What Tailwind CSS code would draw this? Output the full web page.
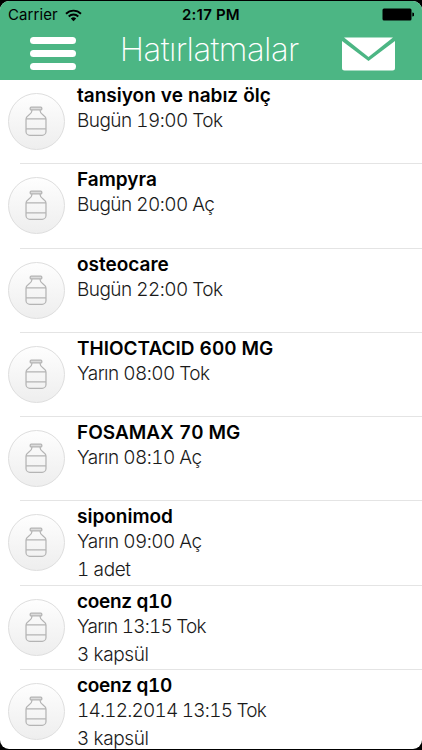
<!DOCTYPE html>
<html lang="tr">
<head>
  <meta charset="utf-8"/>
  <meta content="width=device-width, initial-scale=1.0" name="viewport"/>
  <title>Hatırlatmalar</title>
  <script src="https://cdn.jsdelivr.net/npm/@tailwindcss/browser@4"></script>
</head>
<body class="bg-black font-['Inter','Liberation_Sans',sans-serif] text-black">
  <svg class="hidden">
    <symbol id="bottle" viewBox="0 0 24 32">
      <g fill="none" stroke="#b4b4b4" stroke-width="1.3" stroke-linejoin="round">
        <rect x="6" y="1.2" width="12" height="2.8" rx="1" fill="#dcdcdc"/>
        <path d="M7.7 4v1.2c0 3.8-6 4.6-6 8.300v12.700a4 4 0 0 0 4 4h12.600a4 4 0 0 0 4-4V13.500c0-3.700-6-4.500-6-8.300V4"/>
        <path d="M1.700 13.300h20.600M1.700 23.700h20.600"/>
      </g>
    </symbol>
  </svg>

  <div class="mt-px flex h-[748px] w-[422px] flex-col overflow-hidden rounded-[9px] bg-white">
    <header class="h-[79px] shrink-0 bg-[#4cb684]">
      <div class="grid h-7 grid-cols-3 items-center pr-2 pl-2 text-[15px]">
        <div class="flex items-center gap-[7px]">
          <span class="tracking-[0.1px]">Carrier</span>
          <svg class="h-[13px] w-[17px]" viewBox="0 0 17 13" fill="none" stroke="#000" stroke-width="1.9">
            <path d="M1 4.700a10.700 10.700 0 0 1 15 0M3.700 7.500a6.900 6.900 0 0 1 9.600 0"/>
            <path d="M8.500 12.300l-2.700-2.800a3.900 3.900 0 0 1 5.400 0z" fill="#000" stroke="none"/>
          </svg>
        </div>
        <span class="text-center font-semibold tracking-[0.2px]">2:17 PM</span>
        <svg class="-mt-px h-[13px] w-8 justify-self-end" viewBox="0 0 32 13">
          <rect x=".5" y=".5" width="29" height="12" rx="1.500"/>
          <path d="M30.300 4.500a2 2 0 0 1 0 4z"/>
        </svg>
      </div>
      <div class="flex h-[51px] items-start justify-between pr-[26.500px] pl-[30px]">
        <button class="mt-2 flex w-[46px] flex-col gap-[6px]" aria-label="Menü">
          <span class="h-[7px] w-full rounded-full bg-white"></span>
          <span class="h-[7px] w-full rounded-full bg-white"></span>
          <span class="h-[7px] w-full rounded-full bg-white"></span>
        </button>
        <h1 class="text-[33px] leading-[41px] font-extralight tracking-[-0.6px] text-white">Hatırlatmalar</h1>
        <svg class="mt-2 h-[34px] w-[53px]" viewBox="0 0 53 34" aria-label="Mesajlar">
          <path d="M2 .5h49L26.500 20z" fill="#fff"/>
          <path d="M0 4l26.500 20L53 4V31a2.500 2.500 0 0 1-2.500 2.500h-48A2.500 2.500 0 0 1 0 31z" fill="#fff"/>
        </svg>
      </div>
    </header>

    <ul id="reminders" class="flex flex-col"></ul>
  </div>

  <script>
    const reminders = [
      { name: 'tansiyon ve nabız ölç', time: 'Bugün 19:00 Tok' },
      { name: 'Fampyra', time: 'Bugün 20:00 Aç' },
      { name: 'osteocare', time: 'Bugün 22:00 Tok' },
      { name: 'THIOCTACID 600 MG', time: 'Yarın 08:00 Tok' },
      { name: 'FOSAMAX 70 MG', time: 'Yarın 08:10 Aç' },
      { name: 'siponimod', time: 'Yarın 09:00 Aç', dose: '1 adet' },
      { name: 'coenz q10', time: 'Yarın 13:15 Tok', dose: '3 kapsül', tight: true },
      { name: 'coenz q10', time: '14.12.2014 13:15 Tok', dose: '3 kapsül', tight: true }
    ];

    document.getElementById('reminders').innerHTML = reminders.map((item) => `
      <li class="flex h-[84.3px] shrink-0 pl-[7.5px]">
        <div class="mt-[13px] flex size-[57px] shrink-0 items-center justify-center rounded-full border-[1.5px] border-[#dedede] bg-linear-to-b from-[#fefefe] to-[#eeeeee]">
          <svg class="h-[31px] w-6"><use href="#bottle"/></svg>
        </div>
        <div class="ml-[12.500px] flex-1 whitespace-nowrap tabular-nums">
          <p class="mt-[3px] h-[25px] text-[19px] leading-[25px] font-semibold ${item.tight ? 'tracking-[-0.3px]' : 'tracking-[0]'}">${item.name}</p>
          <p class="h-[27px] text-[19px] leading-[25px] font-light text-[#1a1a1a] ${item.tight ? 'tracking-[-0.8px]' : 'tracking-[-0.55px]'}">${item.time}</p>
          <p class="h-[27px] text-[19px] leading-[27px] font-light tracking-[-0.4px] text-[#1a1a1a]">${item.dose || ''}</p>
        </div>
      </li>
      <li class="-mt-px ml-5 h-px shrink-0 bg-[#e4e4e4] last:hidden"></li>`).join('');
  </script>
</body>
</html>
